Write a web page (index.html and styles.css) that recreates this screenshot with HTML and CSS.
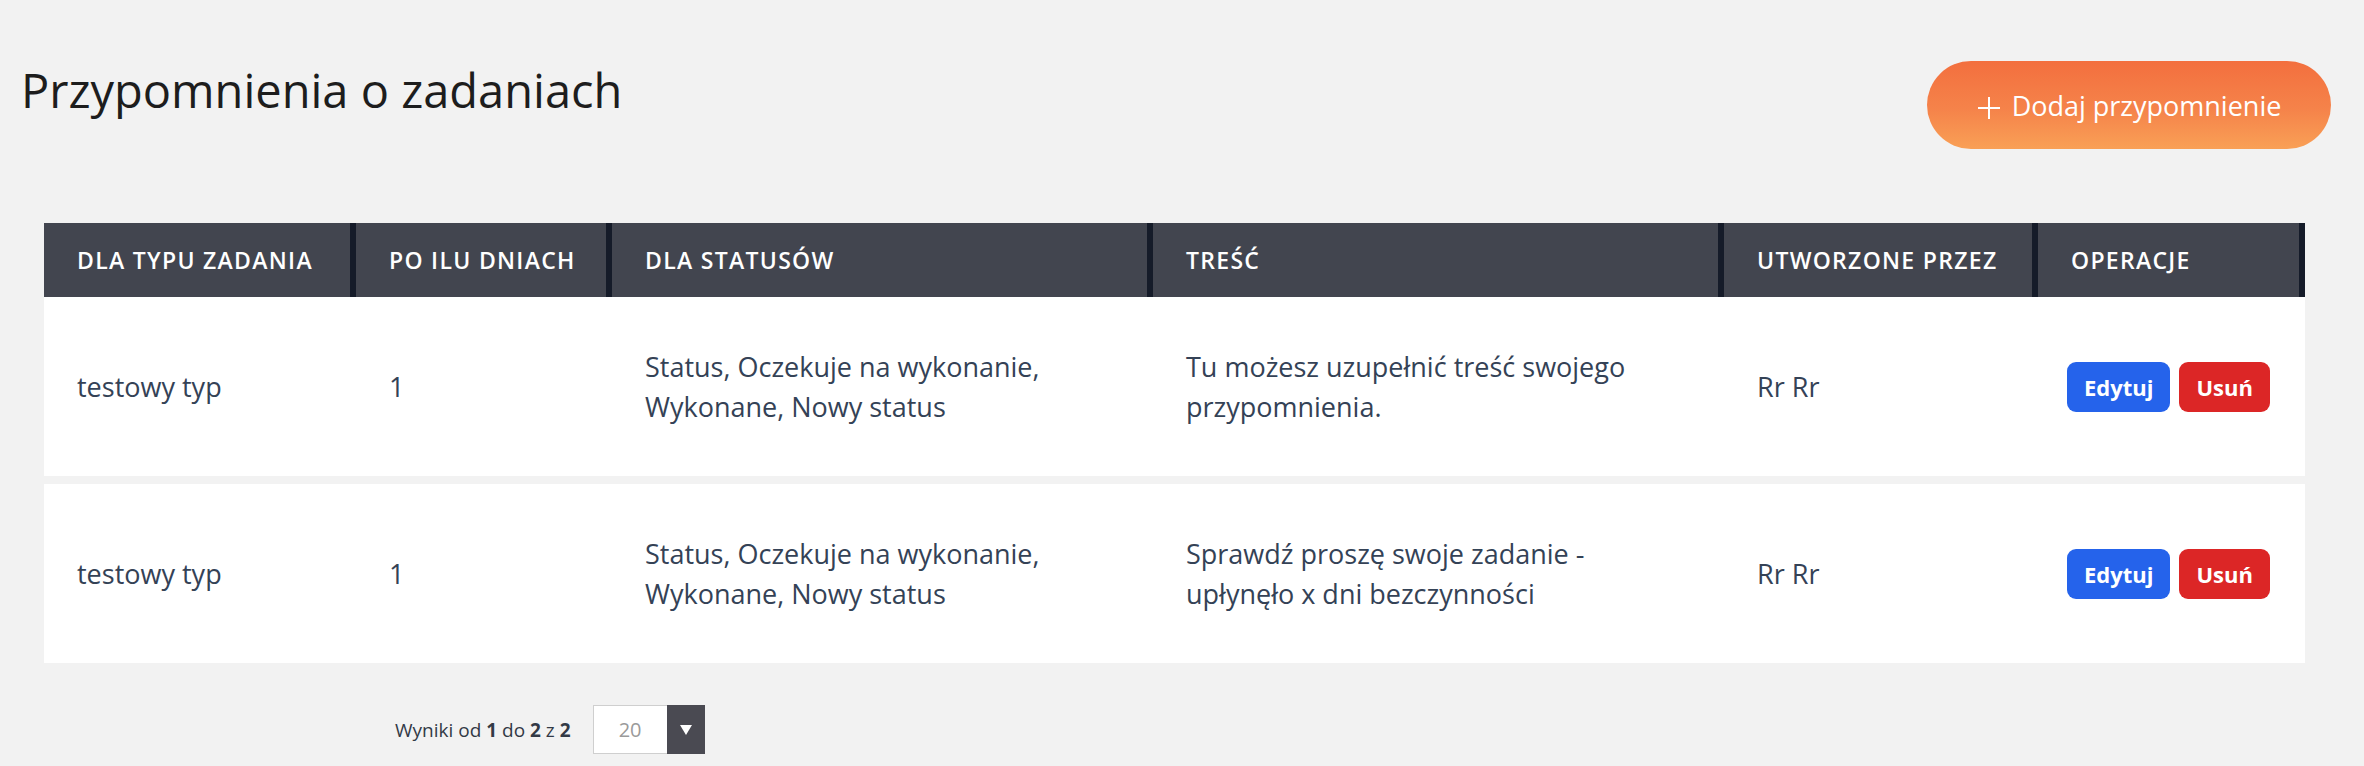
FILE: index.html
```html
<!DOCTYPE html>
<html lang="pl">
<head>
<meta charset="utf-8">
<title>Przypomnienia o zadaniach</title>
<link rel="stylesheet" href="styles.css">
</head>
<body>
<div class="page">
  <div class="topbar">
    <h1 class="title">Przypomnienia o zadaniach</h1>
    <button class="add-btn" type="button">
      <svg class="plus" viewBox="0 0 24 24" width="24" height="24" aria-hidden="true"><path d="M12 1v22M1 12h22" stroke="#fff" stroke-width="2" fill="none"/></svg>
      <span>Dodaj przypomnienie</span>
    </button>
  </div>

  <div class="table">
    <div class="row head">
      <div class="th">DLA TYPU ZADANIA</div>
      <div class="th">PO ILU DNIACH</div>
      <div class="th">DLA STATUSÓW</div>
      <div class="th">TREŚĆ</div>
      <div class="th">UTWORZONE PRZEZ</div>
      <div class="th">OPERACJE</div>
    </div>
    <div class="row item">
      <div class="td">testowy typ</div>
      <div class="td">1</div>
      <div class="td">Status, Oczekuje na wykonanie, Wykonane, Nowy status</div>
      <div class="td">Tu możesz uzupełnić treść swojego przypomnienia.</div>
      <div class="td">Rr Rr</div>
      <div class="td ops"><button class="btn btn-edit" type="button">Edytuj</button><button class="btn btn-del" type="button">Usuń</button></div>
    </div>
    <div class="row item">
      <div class="td">testowy typ</div>
      <div class="td">1</div>
      <div class="td">Status, Oczekuje na wykonanie, Wykonane, Nowy status</div>
      <div class="td">Sprawdź proszę swoje zadanie - upłynęło x dni bezczynności</div>
      <div class="td">Rr Rr</div>
      <div class="td ops"><button class="btn btn-edit" type="button">Edytuj</button><button class="btn btn-del" type="button">Usuń</button></div>
    </div>
  </div>

  <div class="pager">
    <span class="pager-info">Wyniki od <b>1</b> do <b>2</b> z <b>2</b></span>
    <div class="select">
      <span class="select-value">20</span>
      <span class="select-arrow"><svg viewBox="0 0 12 10" width="12" height="10" aria-hidden="true"><path d="M0 0h12L6 10z" fill="#fff"/></svg></span>
    </div>
  </div>
</div>
</body>
</html>
```

FILE: styles.css
```css
html, body {
  margin: 0;
  padding: 0;
  background: #f2f2f2;
}

body {
  font-family: "Open Sans", "Noto Sans", sans-serif;
  color: #344256;
}

.page {
  padding: 60px 33px 0 21px;
}

.topbar {
  display: flex;
  justify-content: space-between;
  align-items: flex-start;
}

.title {
  margin: 0;
  font-size: 47px;
  line-height: 60px;
  font-weight: 500;
  color: #1d1d1d;
}

.add-btn {
  margin-top: 1px;
  height: 88px;
  width: 404px;
  border: 0;
  border-radius: 44px;
  background: linear-gradient(180deg, #f36f3e 0%, #f5834a 55%, #f9a056 100%);
  color: #fff;
  font-family: inherit;
  font-size: 27px;
  display: flex;
  align-items: center;
  justify-content: center;
  gap: 11px;
  padding: 0;
}

.add-btn .plus {
  margin-top: 5px;
}

.table {
  margin: 74px 0 0 23px;
  width: 2261px;
}

.row {
  display: grid;
  grid-template-columns: 312px 256px 541px 571px 314px 267px;
}

.head {
  height: 74px;
  background: #42454f;
}

.th {
  display: flex;
  align-items: center;
  padding-left: 33px;
  border-right: 6px solid #151b29;
  color: #fff;
  font-size: 23px;
  font-weight: 600;
  letter-spacing: 1.3px;
}

.item {
  background: #fff;
  height: 179px;
}

.item + .item {
  margin-top: 8px;
}

.td {
  display: flex;
  align-items: center;
  padding: 0 40px 0 33px;
  font-size: 27px;
  line-height: 40px;
}

.ops {
  padding-left: 29px;
  gap: 9px;
}

.btn {
  height: 50px;
  border: 0;
  border-radius: 9px;
  color: #fff;
  font-family: inherit;
  font-size: 22px;
  font-weight: 700;
  padding: 0 17px;
}

.btn-edit {
  background: #2563eb;
}

.btn-del {
  background: #dc2626;
}

.pager {
  display: flex;
  align-items: center;
  gap: 22px;
  margin: 42px 0 0 374px;
}

.pager-info {
  font-size: 19px;
  color: #333a46;
}

.pager-info b {
  font-weight: 700;
}

.select {
  display: flex;
  width: 112px;
  height: 49px;
  box-sizing: border-box;
  border: 1px solid #cfcfcf;
  background: #fff;
}

.select-value {
  flex: 1;
  display: flex;
  align-items: center;
  justify-content: center;
  font-size: 20px;
  color: #9a9a9a;
}

.select-arrow {
  width: 38px;
  margin: -1px -1px -1px 0;
  background: #4a4a52;
  display: flex;
  align-items: center;
  justify-content: center;
}
```
